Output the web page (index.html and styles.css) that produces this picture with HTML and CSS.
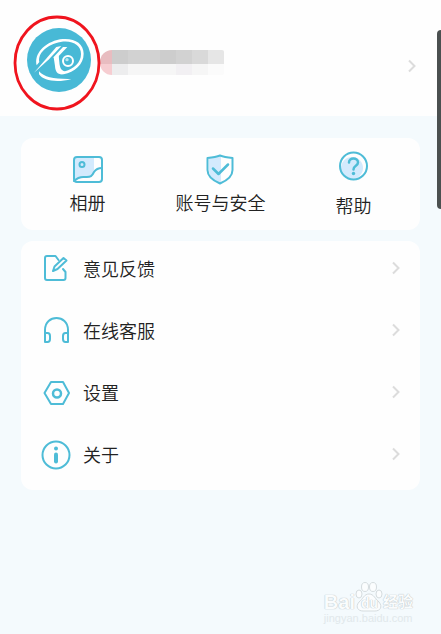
FILE: index.html
```html
<!DOCTYPE html>
<html lang="zh-CN">
<head>
<meta charset="utf-8">
<meta name="viewport" content="width=device-width, initial-scale=1">
<title>我的</title>
<link rel="stylesheet" href="styles.css">
</head>
<body>
<header class="profile">
  <div class="avatar">
    <svg class="avatar-logo" viewBox="6 6 192 192" aria-hidden="true">
      <circle cx="102" cy="102" r="96" fill="#48b9d6"/>
      <g fill="#fff">
        <path d="M35 118C27 84 57 50 105 40C145 34 176 50 176 83C176 116 148 138 116 145C98 147 91 138 90 120L86 94L102 86C101 92 102 98 103 108C104 124 108 134 120 136C146 129 168 110 168 84C168 58 143 42 107 48C65 56 38 82 43 108Z"/>
        <path d="M27 140L94 63L109 60L72 100Z"/>
        <path d="M84 95L114 63L127 63L102 89Z"/>
        <path d="M42 136C58 154 88 160 139 159C98 171 55 165 42 145Z"/>
      </g>
      <circle cx="129" cy="105" r="15" fill="#48b9d6" stroke="#fff" stroke-width="6"/>
      <circle cx="126" cy="101" r="5" fill="#b9e6f1"/>
    </svg>
    <svg class="avatar-ring" viewBox="0 0 88 96" aria-hidden="true">
      <ellipse cx="44" cy="48" rx="42" ry="46" fill="none" stroke="#f0141e" stroke-width="2.800"/>
    </svg>
  </div>
  <div class="masked-name" aria-hidden="true">
    <i class="m-pink"></i><i class="m1"></i><i class="m2"></i><i class="m2"></i><i class="m1"></i><i class="m2"></i><i class="m3"></i><i class="m4"></i>
    <i class="m-rose"></i><i class="m5"></i><i class="m6"></i><i class="m6"></i><i class="m6"></i><i class="m7"></i><i class="m6"></i><i class="m8"></i>
  </div>
  <svg class="chevron" viewBox="0 0 8 14" aria-hidden="true"><path d="M1 1.500L6.500 7L1 12.500"/></svg>
</header>

<main class="content">
  <nav class="card shortcuts">
    <a class="shortcut" href="#album">
      <svg class="icon" viewBox="0 0 32 32" aria-hidden="true">
        <path class="tint" d="M4 5H22V21L14 24L2 27V7Z"/>
        <rect x="2" y="4" width="28" height="25" rx="3"/>
        <circle cx="10" cy="11.500" r="2.500"/>
        <path d="M2 28C6 24 9 23.500 13 24C19 24.500 20 23 22 19C24 16 26 15 30 15"/>
      </svg>
      <span>相册</span>
    </a>
    <a class="shortcut" href="#security">
      <svg class="icon" viewBox="0 0 32 32" aria-hidden="true">
        <path class="tint" d="M16 2L4 5V17C4 24 9 27 16 31Z"/>
        <path d="M15 2.500C19 4 23 4.500 27.500 5V17C27.500 24 21 28 15 30.500C9 28 2.500 24 2.500 17V5C7 4.500 11 4 15 2.500Z"/>
        <path class="bold" d="M8 15.500L13.500 21L23 11.500"/>
      </svg>
      <span>账号与安全</span>
    </a>
    <a class="shortcut shortcut-help" href="#help">
      <svg class="icon" viewBox="0 0 32 32" aria-hidden="true">
        <circle class="tint" cx="14" cy="18" r="11"/>
        <circle cx="15.500" cy="16" r="13.500"/>
        <path class="bold" d="M11 12.500C11 7 20 7 20 12.500C20 16 15.500 15.500 15.500 19.500"/>
        <circle class="dot" cx="15.500" cy="23.500" r="1.700"/>
      </svg>
      <span>帮助</span>
    </a>
  </nav>

  <nav class="card menu">
    <a class="row" href="#feedback">
      <svg class="icon" viewBox="0 0 32 32" aria-hidden="true">
        <path d="M18.500 8L15.500 4H7C5.500 4 5 4.500 5 6V26C5 27.500 5.500 28 7 28H23.500C25 28 25.500 27.500 25.500 26V20L23 17"/>
        <path d="M13 19L14.500 14.500L23.500 6L26.500 8.500L17.500 17Z"/>
      </svg>
      <span>意见反馈</span>
      <svg class="chevron" viewBox="0 0 8 14" aria-hidden="true"><path d="M1 1.500L6.500 7L1 12.500"/></svg>
    </a>
    <a class="row" href="#service">
      <svg class="icon" viewBox="0 0 32 32" aria-hidden="true">
        <path d="M5 28V16C5 0 28 0 28 16V28M5 19H7.500C9 19 10 20 10 22V25C10 27 9 28 7.500 28H5M28 19H25.500C24 19 23 20 23 22V25C23 27 24 28 25.500 28H28"/>
      </svg>
      <span>在线客服</span>
      <svg class="chevron" viewBox="0 0 8 14" aria-hidden="true"><path d="M1 1.500L6.500 7L1 12.500"/></svg>
    </a>
    <a class="row" href="#settings">
      <svg class="icon" viewBox="0 0 32 32" aria-hidden="true">
        <path d="M11 6H23L29 17L23 28H11L4.500 17Z"/>
        <circle class="bold" cx="17" cy="17.500" r="4"/>
      </svg>
      <span>设置</span>
      <svg class="chevron" viewBox="0 0 8 14" aria-hidden="true"><path d="M1 1.500L6.500 7L1 12.500"/></svg>
    </a>
    <a class="row" href="#about">
      <svg class="icon" viewBox="0 0 32 32" aria-hidden="true">
        <circle cx="16" cy="17" r="13.500"/>
        <circle class="dot" cx="16" cy="10.500" r="2"/>
        <path class="stem" d="M16 16.500V23.500"/>
      </svg>
      <span>关于</span>
      <svg class="chevron" viewBox="0 0 8 14" aria-hidden="true"><path d="M1 1.500L6.500 7L1 12.500"/></svg>
    </a>
  </nav>
</main>

<div class="side-handle"></div>
<div class="watermark">
  <div class="brand">
    <span>Bai</span>
    <span class="paw">
      <svg viewBox="0 0 28 30" aria-hidden="true">
        <ellipse cx="4" cy="12" rx="3" ry="4"/>
        <ellipse cx="10" cy="5" rx="3.500" ry="4.500"/>
        <ellipse cx="18" cy="5" rx="3.500" ry="4.500"/>
        <ellipse cx="24" cy="12" rx="3" ry="4"/>
        <path d="M14 12C19 12 20 17 24 20C28 25 25 29 20 29H8C3 29 0 25 4 20C8 17 9 12 14 12Z"/>
      </svg>
      <span class="du">du</span>
    </span>
    <span class="brand-cn">经验</span>
  </div>
  <div class="site">jingyan.baidu.com</div>
</div>
</body>
</html>
```
FILE: styles.css
```css
* {
  box-sizing: border-box;
}

body {
  position: relative;
  min-height: 100vh;
  margin: 0;
  background: #f4fafd;
  color: #222;
  font-family: "Noto Sans CJK SC", sans-serif;
  font-size: 18px;
  font-weight: 350;
  line-height: 26px;
}

a {
  color: inherit;
  text-decoration: none;
}

svg {
  display: block;
}

.profile {
  display: flex;
  align-items: flex-start;
  height: 116px;
  padding: 28px 25px 0 27px;
  background: #fefefe;
}

.avatar {
  position: relative;
  width: 64px;
  height: 64px;
}

.avatar-ring {
  position: absolute;
  top: -13px;
  left: -14px;
  z-index: 1;
  width: 88px;
  height: 96px;
}

.masked-name {
  display: grid;
  grid-template-columns: 12px repeat(7, 16px);
  grid-template-rows: 14px 11px;
  margin: 22px auto 0 9px;
  overflow: hidden;
  border-radius: 12px 2px 2px 12px;
}

.m-pink { background: #e8bcc0; }
.m-rose { background: #f6cdd1; }
.m1 { background: #cdcdcd; }
.m2 { background: #d2d2d2; }
.m3 { background: #d9d9d9; }
.m4 { background: #e6e6e6; }
.m5 { background: #ededee; }
.m6 { background: #f6f6f6; }
.m7 { background: #f2f0f3; }
.m8 { background: #fbfbfb; }

.chevron {
  width: 8px;
  height: 14px;
  fill: none;
  stroke: #dcdcdc;
  stroke-width: 2;
}

.profile .chevron {
  margin-top: 31px;
}

.content {
  display: grid;
  gap: 11px;
  padding: 22px 21px 0;
}

.card {
  border-radius: 12px;
  background: #fefefe;
}

.shortcuts {
  display: grid;
  grid-template-columns: repeat(3, 1fr);
  height: 92px;
  padding-top: 15px;
}

.shortcut {
  display: flex;
  flex-direction: column;
  align-items: center;
  gap: 4px;
}

.shortcut-help {
  gap: 10px;
  margin-top: -3px;
}

.icon {
  flex: none;
  width: 32px;
  height: 32px;
  fill: none;
  stroke: #4ebcd7;
  stroke-width: 2;
  stroke-linecap: round;
  stroke-linejoin: round;
}

.icon .tint {
  fill: #d3eafd;
  stroke: none;
}

.icon .bold {
  stroke-width: 2.5;
}

.icon .dot {
  fill: #4ebcd7;
  stroke: none;
}

.icon .stem {
  stroke-width: 4;
}

.menu {
  display: grid;
  grid-auto-rows: 54px;
  gap: 8px;
  padding: 0 20px 9px 19px;
}

.row {
  display: flex;
  align-items: center;
  gap: 11px;
}

.row .chevron {
  margin-left: auto;
}

.side-handle {
  position: absolute;
  top: 30px;
  right: 0;
  width: 4px;
  height: 179px;
  border-radius: 4px 0 0 4px;
  background: #4b5050;
}

.watermark {
  position: absolute;
  right: 28px;
  bottom: 10px;
  color: #fafcfd;
  font-family: "Liberation Sans", "Noto Sans CJK SC", sans-serif;
  text-shadow: 0 0 1px #b4bdc1, 0 0 1px #c3cbcf;
}

.brand {
  display: flex;
  align-items: flex-end;
  font-size: 20px;
  font-weight: 700;
  line-height: 20px;
}

.paw {
  position: relative;
  width: 28px;
  height: 30px;
}

.paw svg {
  width: 28px;
  height: 30px;
  fill: #fbfdfe;
  stroke: #d5dcdf;
}

.du {
  position: absolute;
  top: 11px;
  left: 6px;
  font-size: 14px;
}

.brand-cn {
  font-size: 15px;
}

.site {
  color: #e1e8eb;
  font-size: 11px;
  line-height: 12px;
  text-shadow: none;
}
```
